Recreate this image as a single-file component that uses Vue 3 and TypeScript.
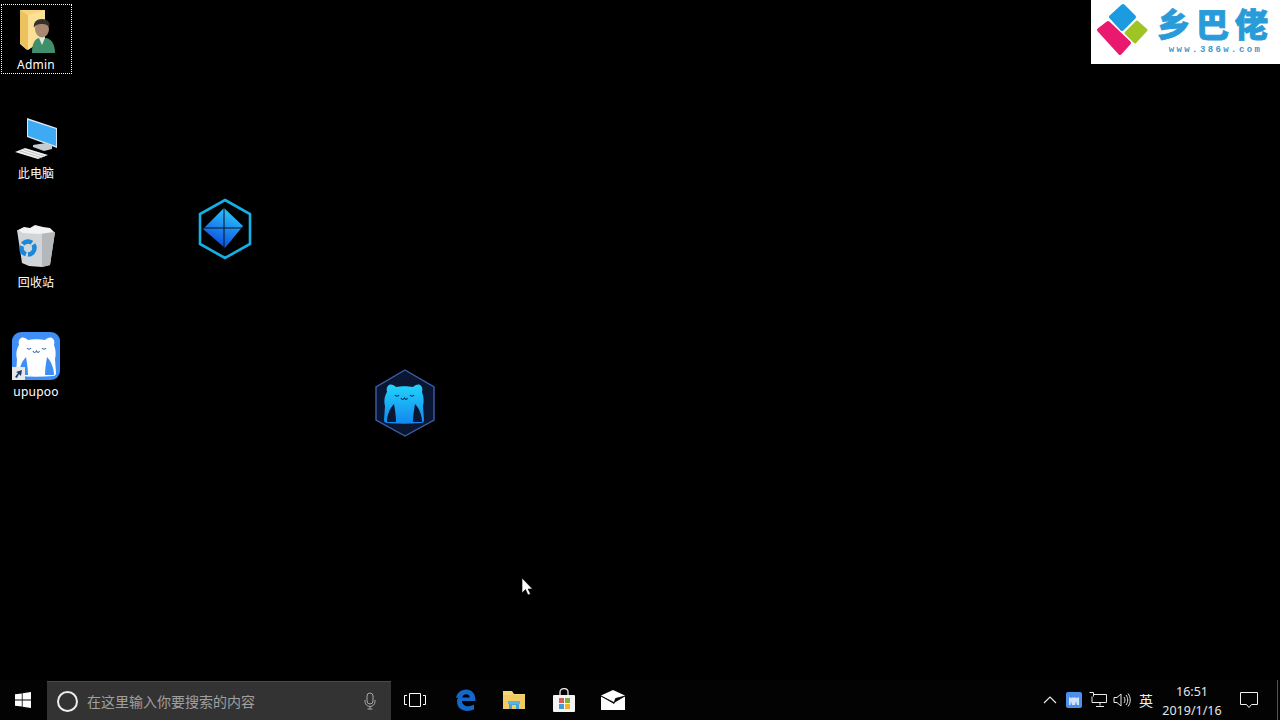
<template>
  <div class="screen">
    <main class="desktop">
      <div class="icon-col">
        <div v-for="item in desktopIcons" :key="item.name" class="desk-item">
          <div :class="['desk-box', { selected: item.selected }]"></div>
          <svg v-if="item.id === 'admin'" class="desk-svg" viewBox="0 0 72 52" width="72" height="52">
            <path d="M20 6h25v30l-18 10-7-6z" fill="#f6d57c"/>
            <path d="M20 6l8 5v35l-8-7z" fill="#ecc25e"/>
            <path d="M28 11l17-5v28l-17 12z" fill="#fbe196"/>
            <path d="M32 49c0-10 3-14 7-15h7c6 1 9 7 9 15z" fill="#3f8f6c"/>
            <path d="M39 34l3 7 3-7z" fill="#dfeadf"/>
            <ellipse cx="42" cy="25" rx="7" ry="8.500" fill="#a88871"/>
            <path d="M34 24c-1-6 3-9 8-9s9 3 7 9c-1-3-3-4-7-4s-7 1-8 4z" fill="#33302e"/>
          </svg>
          <svg v-else-if="item.id === 'pc'" class="desk-svg" viewBox="0 0 72 52" width="72" height="52">
            <path d="M27 5l30 10v20L27 24z" fill="#d9e6f0"/>
            <path d="M28 7l28 9v17L28 23z" fill="#3eaaf3"/>
            <path d="M33 32l13-2 6 3v3l-8 2-11-4z" fill="#c5ccd2"/>
            <path d="M15 39l10-4 23 7-10 4z" fill="#f1f1f1"/>
            <path d="M20 38l22 7M23 36.500l22 7" stroke="#a5a8ab" stroke-width=".7"/>
          </svg>
          <svg v-else-if="item.id === 'bin'" class="desk-svg" viewBox="0 0 72 52" width="72" height="52">
            <path d="M17 8l38 2-5 33-8 2-13-1-7-3z" fill="#d2d5d7"/>
            <path d="M42 9l13 1-5 33-8 2z" fill="#b4b8bb"/>
            <path d="M18 8l6-3 6 1 5-3 8 2 7 1 4 4-15 2-16-1z" fill="#f3f3f3"/>
            <circle cx="28" cy="26" r="6.500" fill="none" stroke="#1a87d8" stroke-width="4.500" stroke-dasharray="10 2"/>
          </svg>
          <svg v-else class="desk-svg" viewBox="0 0 72 52" width="72" height="52">
            <rect x="12" y="1" width="48" height="48" rx="9" fill="#3f8ef5"/>
            <g transform="translate(6 -10)">
              <path :d="catBody" fill="#fff"/>
              <path :d="catArms" fill="#3f8ef5"/>
              <path :d="catFace" stroke="#3f6fb5" stroke-width="1.200" fill="none"/>
            </g>
            <rect x="12" y="36" width="13" height="13" fill="#e8e8e8"/>
            <path d="M15 46l3-4-2-1 6-2-1 6-2-2-2 4z" fill="#14406f"/>
          </svg>
          <span class="desk-label">{{ item.name }}</span>
        </div>
      </div>

      <svg class="hex hex-a" viewBox="0 0 56 62" width="56" height="62">
        <defs>
          <linearGradient id="gemGrad" x1="0.700" y1="0" x2="0.300" y2="1">
            <stop offset="0" stop-color="#2fcafd"/>
            <stop offset="1" stop-color="#0a44dc"/>
          </linearGradient>
        </defs>
        <path d="M28 2l25 14v30L28 60 3 46V16z" fill="none" stroke="#16b0e6" stroke-width="2.600"/>
        <path d="M27 10l19 18-18 22-22-19z" fill="url(#gemGrad)"/>
        <path d="M27 8v42M5 30h42" stroke="#02121e" stroke-width="1"/>
      </svg>

      <svg class="hex hex-b" viewBox="0 0 62 70" width="62" height="70">
        <defs>
          <linearGradient id="catGrad" x1="0" y1="0" x2="0" y2="1">
            <stop offset="0" stop-color="#22d3fb"/>
            <stop offset="1" stop-color="#1287ef"/>
          </linearGradient>
        </defs>
        <path d="M31 2l29 17v33L31 68 2 52V19z" fill="#0b1633" stroke="#3a5fa8" stroke-width="1.400"/>
        <path :d="catBody" fill="url(#catGrad)"/>
        <path :d="catArms" fill="#0b1633"/>
        <path :d="catFace" stroke="#0a2a50" stroke-width="1.200" fill="none"/>
      </svg>

      <div class="brand">
        <svg class="brand-mark" viewBox="0 0 62 62" width="62" height="62">
          <path d="M20 17L32 6l11 11-12 12z" fill="#1b9ce0" stroke="#1b9ce0" stroke-width="4" stroke-linejoin="round"/>
          <path d="M8 30l9-7 21 20-9 10z" fill="#e8196f" stroke="#e8196f" stroke-width="4" stroke-linejoin="round"/>
          <path d="M35 33l11-11 9 8-11 12z" fill="#9fc524" stroke="#9fc524" stroke-width="3" stroke-linejoin="round"/>
        </svg>
        <div class="brand-text">
          <span class="brand-name">乡巴佬</span>
          <span class="brand-url">www.386w.com</span>
        </div>
      </div>

      <svg class="cursor" viewBox="0 0 12 20" width="12" height="20">
        <path d="M1 1v15l3.500-3.500L7 18l2.500-1-2.400-5H11.500z" fill="#fff" stroke="#000" stroke-width=".6"/>
      </svg>
    </main>

    <footer class="taskbar">
      <button class="tb-start">
        <svg viewBox="0 0 16 16" width="16" height="16">
          <path d="M0 2.300l6.800-.9v6.200H0zM7.600 1.300L16 0v7.600H7.600zM0 8.400h6.800v6.200L0 13.700zM7.600 8.400H16V16l-8.400-1.200z" fill="#fff"/>
        </svg>
      </button>
      <div class="tb-search">
        <span class="cortana"></span>
        <span class="search-hint">在这里输入你要搜索的内容</span>
        <svg class="mic" viewBox="0 0 14 18" width="14" height="18">
          <rect x="4" y="1" width="6" height="11" rx="3" fill="none" stroke="#a8a8a8"/>
          <path d="M2 8v1.500a5 5 0 0 0 10 0V8M7 14.500V17M4.500 17h5" fill="none" stroke="#a8a8a8"/>
        </svg>
      </div>

      <div class="tb-apps">
        <div class="tb-app">
          <svg viewBox="0 0 22 14" width="22" height="14">
            <path d="M5.500.5h11v13h-11zM3 2.500H.5v9H3M19 2.500h2.500v9H19" fill="none" stroke="#fff"/>
          </svg>
        </div>
        <div class="tb-app">
          <svg viewBox="0 0 22 22" width="22" height="22">
            <path d="M2 9C3 4 7 .5 12 .5c6 0 9.500 4 9.500 11.500H8c0 5 6.500 7 12 3.500v5c-8 3.500-17 .5-17-8 0-3 1.500-5.500 4-7-1.500 1-2.500 2-3 3zM8.200 8.500h7.500c0-4.500-6.700-4.500-7.500 0z" fill="#1567c9"/>
          </svg>
        </div>
        <div class="tb-app">
          <svg viewBox="0 0 22 20" width="22" height="20">
            <path d="M0 1h9l2 3h11v3H0z" fill="#f4d774"/>
            <path d="M0 5h22v14H0z" fill="#f1cc66"/>
            <path d="M6 19v-8h10v8h-3v-4H9v4z" fill="#48a5cf"/>
            <path d="M5 11h12v3H5z" fill="#56b6de"/>
          </svg>
        </div>
        <div class="tb-app">
          <svg viewBox="0 0 24 24" width="24" height="24">
            <path d="M8 8V4c0-4.500 8-4.500 8 0v4" fill="none" stroke="#e8e8e8" stroke-width="1.300"/>
            <rect x="1" y="7" width="22" height="17" rx="1" fill="#f4f4f4"/>
            <rect x="7" y="10" width="5" height="5" fill="#d6604d"/>
            <rect x="13" y="10" width="5" height="5" fill="#7fb13c"/>
            <rect x="7" y="16" width="5" height="5" fill="#3da0d8"/>
            <rect x="13" y="16" width="5" height="5" fill="#f0b429"/>
          </svg>
        </div>
        <div class="tb-app">
          <svg viewBox="0 0 26 20" width="26" height="20">
            <path d="M1 5.500L13 0l12 5.500V20H1z" fill="#fff"/>
            <path d="M1 6l13 6.500L25 6l-9.500 2.500-1.500 5z" fill="#000" stroke="#000" stroke-width=".8"/>
          </svg>
        </div>
      </div>

      <div class="tb-tray">
        <span class="tray-cell">
          <svg viewBox="0 0 14 8" width="14" height="8">
            <path d="M1 7l6-6 6 6" fill="none" stroke="#e8e8e8" stroke-width="1.200"/>
          </svg>
        </span>
        <span class="tray-cell">
          <svg viewBox="0 0 16 16" width="16" height="16">
            <rect width="16" height="16" rx="2" fill="#4d90ec"/>
            <path d="M3 13V5l2 1c2-.6 4-.6 6 0l2-1v8h-2l-1-4-1 4H6L5 9l-.5 4z" fill="#cfe3fb"/>
          </svg>
        </span>
        <span class="tray-cell">
          <svg viewBox="0 0 18 16" width="18" height="16">
            <path d="M.5.500h4v4M5 2.500h12.500v8H5M3 4.500v6h2M11 10.500v3M7 14.500h8" fill="none" stroke="#e8e8e8"/>
          </svg>
        </span>
        <span class="tray-cell">
          <svg viewBox="0 0 18 16" width="18" height="16">
            <path d="M1 5.500h3L8 2v12l-4-3.500H1zM11 5c1.300 1.700 1.300 4.300 0 6M13 3c2.300 3 2.300 7 0 10M15 1.500c3 4 3 9 0 13" fill="none" stroke="#e8e8e8"/>
          </svg>
        </span>
        <span class="tray-cell tray-ime">英</span>
        <div class="tray-clock">
          <span>16:51</span>
          <span>2019/1/16</span>
        </div>
        <span class="tray-note">
          <svg viewBox="0 0 18 16" width="18" height="16">
            <path d="M.5.500h17v12h-6l-2.500 3-2.500-3h-6z" fill="none" stroke="#f0f0f0"/>
          </svg>
        </span>
        <span class="show-desktop"></span>
      </div>
    </footer>
  </div>
</template>

<script setup lang="ts">
interface DesktopIcon {
  id: string;
  name: string;
  selected?: boolean;
}

const desktopIcons: DesktopIcon[] = [
  { id: "admin", name: "Admin", selected: true },
  { id: "pc", name: "此电脑" },
  { id: "bin", name: "回收站" },
  { id: "upupoo", name: "upupoo" },
];

// the upupoo cat is used twice, on the shortcut and on the floating widget
const catBody = "M13 24c-1-3 0-6 2-7 2-1 5 0 7 2 5-1 12-1 17 0 2-2 5-3 7-2 2 1 3 4 2 7 2 5 2 10 1 14l1 14c0 2-1 3-3 3-11 1-23 1-34 0-2 0-3-1-3-3l1-14c-1-4-1-9 2-14z";
const catArms = "M13 54c0-7 3-14 7-18 1 6 2 12 2 18zM48 54c0-7-3-14-7-18-1 6-2 12-2 18z";
const catFace = "M21 27c1 1.500 3 1.500 4 0M36 27c1 1.500 3 1.500 4 0M27 30c1 2 2 2 3.500 0 1 2 2 2 3 0";
</script>

<style>
html,
body {
  margin: 0;
  background: #000;
}
</style>

<style scoped>
.screen {
  width: 1280px;
  height: 720px;
  display: flex;
  flex-direction: column;
  overflow: hidden;
  background: #000;
  color: #fff;
  font-family: "Noto Sans", "Noto Sans CJK SC", sans-serif;
}

.desktop {
  position: relative;
  flex: 1;
}

.icon-col {
  display: flex;
  flex-direction: column;
  width: 72px;
  padding-top: 4px;
}

.desk-item {
  position: relative;
  height: 109px;
  width: 72px;
}

.desk-box {
  box-sizing: border-box;
  width: 71px;
  height: 70px;
  margin-left: 1px;
  border: 1px dotted transparent;
}

.desk-box.selected {
  border-color: #fff;
}

.desk-svg {
  position: absolute;
  left: 0;
  top: 0;
}

.desk-label {
  position: absolute;
  top: 52px;
  left: 0;
  width: 72px;
  text-align: center;
  font-size: 12px;
  line-height: 17px;
  letter-spacing: 0.2px;
}

.hex {
  position: absolute;
}

.hex-a {
  left: 197px;
  top: 198px;
}

.hex-b {
  left: 374px;
  top: 368px;
}

.cursor {
  position: absolute;
  left: 521px;
  top: 577px;
}

.brand {
  position: absolute;
  top: 0;
  left: 1091px;
  width: 189px;
  height: 64px;
  display: flex;
  background: #fff;
}

.brand-mark {
  flex: none;
}

.brand-text {
  display: flex;
  flex-direction: column;
  align-items: center;
  margin-left: 4px;
  padding-top: 6px;
}

.brand-name {
  font-size: 33px;
  line-height: 38px;
  font-weight: 900;
  letter-spacing: 6px;
  color: #2a9bd9;
  white-space: nowrap;
  -webkit-text-stroke: 0.8px #2a9bd9;
}

.brand-url {
  font-family: "Liberation Mono", monospace;
  font-size: 9px;
  line-height: 12px;
  font-weight: 700;
  letter-spacing: 2.400px;
  color: #3f98ca;
}

.taskbar {
  flex: none;
  height: 40px;
  display: flex;
  align-items: center;
  background: #030303;
}

.tb-start {
  width: 47px;
  height: 40px;
  padding: 0 2px 0 0;
  display: flex;
  align-items: center;
  justify-content: center;
  border: 0;
  background: transparent;
}

.tb-search {
  box-sizing: border-box;
  width: 344px;
  height: 39px;
  margin-top: 1px;
  padding: 0 12px 0 10px;
  display: flex;
  align-items: center;
  background: #333;
  border-top: 1px solid #484848;
}

.cortana {
  box-sizing: border-box;
  width: 21px;
  height: 21px;
  border: 2.500px solid #eee;
  border-radius: 50%;
}

.search-hint {
  flex: 1;
  margin-left: 9px;
  margin-top: -1px;
  font-size: 14px;
  color: #a0a0a0;
}

.mic {
  margin-right: 2px;
}

.tb-apps {
  display: flex;
  margin-left: -0.500px;
}

.tb-app {
  width: 49.500px;
  height: 40px;
  display: flex;
  align-items: center;
  justify-content: center;
}

.tb-tray {
  margin-left: auto;
  display: flex;
  align-items: center;
  height: 40px;
}

.tray-cell {
  width: 24px;
  display: flex;
  align-items: center;
  justify-content: center;
}

.tray-ime {
  font-size: 14px;
  color: #eee;
}

.tray-clock {
  width: 68px;
  margin-top: 2px;
  display: flex;
  flex-direction: column;
  align-items: center;
  font-size: 12.500px;
  line-height: 19px;
  color: #e6e6e6;
}

.tray-note {
  width: 46px;
  display: flex;
  justify-content: center;
}

.show-desktop {
  width: 1px;
  height: 40px;
  margin-left: 5px;
  margin-right: 2px;
  background: #555;
}
</style>
